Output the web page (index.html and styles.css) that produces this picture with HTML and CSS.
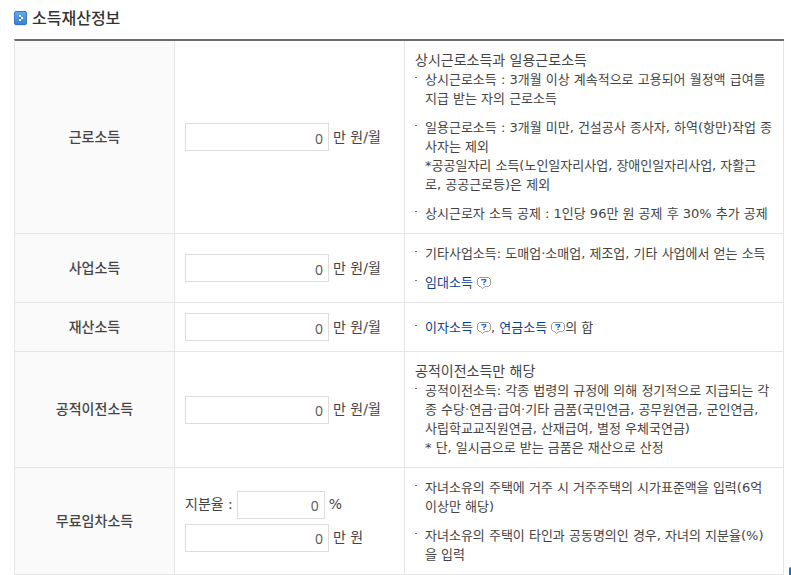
FILE: index.html
```
<!DOCTYPE html>
<html lang="ko">
<head>
  <meta charset="UTF-8">
  <meta name="viewport" content="width=device-width, initial-scale=1.0">
  <title>소득재산정보</title>
  <link rel="stylesheet" href="styles.css">
</head>
<body>

  <!-- speech bubble with a question mark, used next to the help links -->
  <svg class="defs" width="0" height="0" aria-hidden="true">
    <symbol id="help" viewBox="0 0 14 12">
      <path d="M2.5 .5h9l2 2v5l-2 2H8L5.5 11.5 3.5 9.5h-1l-2-2v-5z" fill="#fff" stroke="#999"/>
      <path d="M5 3.5V2.6h3.6v1.8L7 5.2V6" fill="none" stroke="#1c6cc4" stroke-width="1.3"/>
      <path d="M6.3 6.8h1.4V8H6.3z" fill="#1c6cc4"/>
    </symbol>
  </svg>

  <main>
    <h1>
      <svg class="bullet" viewBox="0 0 13 15" aria-hidden="true">
        <defs>
          <linearGradient id="blue" x1="0" y1="0" x2="0" y2="1">
            <stop offset="0" stop-color="#62acea"/>
            <stop offset="1" stop-color="#3a7fd2"/>
          </linearGradient>
        </defs>
        <rect y="2" width="13" height="13" rx="2" fill="#e3e3e3"/>
        <rect x=".5" y=".5" width="12" height="13" rx="1.5" fill="url(#blue)" stroke="#3478c8"/>
        <path d="M5 4h2v2H5zM7 6h2v2H7zM5 8h2v2H5z" fill="#fff"/>
        <path d="M5 6h2v2H5z" fill="#3474c2"/>
      </svg>
      소득재산정보
    </h1>

    <table class="income">
      <colgroup>
        <col class="col-name">
        <col class="col-value">
        <col>
      </colgroup>
      <tbody>
        <tr>
          <th scope="row"><label for="earned">근로소득</label></th>
          <td><div class="field"><input type="text" id="earned" value="0"> 만 원/월</div></td>
          <td>
            <p>상시근로소득과 일용근로소득</p>
            <ul>
              <li>상시근로소득 : 3개월 이상 계속적으로 고용되어 월정액 급여를 지급 받는 자의 근로소득</li>
              <li>일용근로소득 : 3개월 미만, 건설공사 종사자, 하역(항만)작업 종사자는 제외<br>*공공일자리 소득(노인일자리사업, 장애인일자리사업, 자활근<br>로, 공공근로등)은 제외</li>
              <li>상시근로자 소득 공제 : 1인당 96만 원 공제 후 30% 추가 공제</li>
            </ul>
          </td>
        </tr>
        <tr>
          <th scope="row"><label for="business">사업소득</label></th>
          <td><div class="field"><input type="text" id="business" value="0"> 만 원/월</div></td>
          <td>
            <ul>
              <li>기타사업소득: 도매업·소매업, 제조업, 기타 사업에서 얻는 소득</li>
              <li><a href="#">임대소득 <svg class="help"><use href="#help"/></svg></a></li>
            </ul>
          </td>
        </tr>
        <tr>
          <th scope="row"><label for="property">재산소득</label></th>
          <td><div class="field"><input type="text" id="property" value="0"> 만 원/월</div></td>
          <td>
            <ul>
              <li><a href="#">이자소득 <svg class="help"><use href="#help"/></svg></a>, <a href="#">연금소득 <svg class="help"><use href="#help"/></svg></a>의 합</li>
            </ul>
          </td>
        </tr>
        <tr>
          <th scope="row"><label for="transfer">공적이전소득</label></th>
          <td><div class="field"><input type="text" id="transfer" value="0"> 만 원/월</div></td>
          <td>
            <p>공적이전소득만 해당</p>
            <ul>
              <li>공적이전소득: 각종 법령의 규정에 의해 정기적으로 지급되는 각종 수당·연금·급여·기타 금품(국민연금, 공무원연금, 군인연금,<br>사립학교교직원연금, 산재급여, 별정 우체국연금)<br>* 단, 일시금으로 받는 금품은 재산으로 산정</li>
            </ul>
          </td>
        </tr>
        <tr>
          <th scope="row"><label for="rent">무료임차소득</label></th>
          <td>
            <div class="field"><label for="share">지분율 :</label> <input type="text" id="share" class="short" value="0"> %</div>
            <div class="field"><input type="text" id="rent" value="0"> 만 원</div>
          </td>
          <td>
            <ul>
              <li>자녀소유의 주택에 거주 시 거주주택의 시가표준액을 입력(6억<br>이상만 해당)</li>
              <li>자녀소유의 주택이 타인과 공동명의인 경우, 자녀의 지분율(%)<br>을 입력</li>
            </ul>
          </td>
        </tr>
      </tbody>
    </table>
  </main>

  <!-- edge of the floating side button -->
  <div class="side-tab"></div>

</body>
</html>
```

FILE: styles.css
```
* {
  box-sizing: border-box;
}
body {
  margin: 0;
  background: #fff;
  color: #444;
  font-family: "DejaVu Sans", "Noto Sans CJK KR", sans-serif;
  font-size: 14px;
  line-height: 19px;
}
main {
  padding: 8px 7px 0 14px;
}
.defs {
  position: absolute;
}
h1 {
  display: flex;
  align-items: center;
  gap: 5px;
  margin: 0 0 10px;
  color: #333;
  font-size: 16px;
  font-weight: 500;
  line-height: 21px;
}
.bullet {
  width: 13px;
  height: 15px;
}

/* Income table */
.income {
  width: 100%;
  table-layout: fixed;
  border-collapse: separate;
  border-spacing: 0;
  border-top: 2px solid #6b6b6d;
  border-left: 1px solid #e5e5e5;
}
.col-name {
  width: 160px;
}
.col-value {
  width: 230px;
}
th, td {
  padding: 10px;
  border-right: 1px solid #e5e5e5;
  border-bottom: 1px solid #e5e5e5;
  vertical-align: middle;
  text-align: left;
}
th {
  background: #fafafa;
  font-weight: 500;
  text-align: center;
}

/* Inputs */
.field {
  display: flex;
  align-items: center;
  gap: 4px;
}
.field + .field {
  margin-top: 5px;
}
input {
  width: 144px;
  height: 28px;
  padding: 2px 5px 0;
  border: 1px solid #ddd;
  background: #fff;
  color: #555;
  font-family: "Open Sans", sans-serif;
  font-size: 14px;
  text-align: right;
}
input.short {
  width: 88px;
}

/* Notes */
p {
  margin: 0;
}
ul {
  margin: 0;
  padding: 0;
  list-style: none;
  font-size: 13px;
}
li {
  position: relative;
  padding-left: 10px;
}
li + li {
  margin-top: 10px;
}
li::before {
  content: "";
  position: absolute;
  top: 7px;
  left: 0;
  width: 2px;
  height: 1px;
  background: #777;
}
a {
  color: #0b3f91;
  text-decoration: none;
}
.help {
  width: 14px;
  height: 12px;
  vertical-align: -2px;
}

.side-tab {
  position: fixed;
  right: 0;
  bottom: 0;
  width: 2px;
  height: 8px;
  border-top-left-radius: 2px;
  background: #0b72d0;
}
```
